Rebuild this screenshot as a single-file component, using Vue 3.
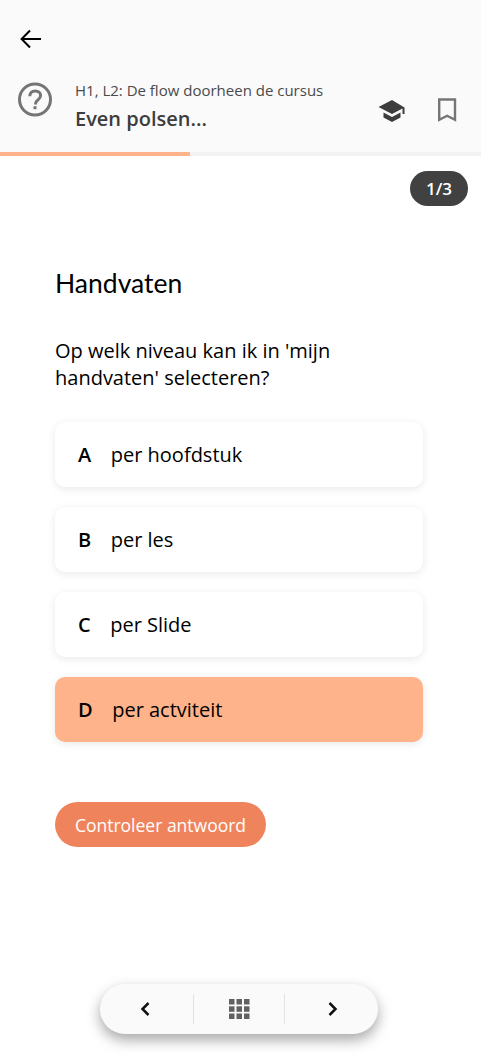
<script setup>
const options = [
  { letter: 'A', text: 'per hoofdstuk', selected: false },
  { letter: 'B', text: 'per les', selected: false },
  { letter: 'C', text: 'per Slide', selected: false },
  { letter: 'D', text: 'per actviteit', selected: true },
]
</script>

<template>
  <div class="page">
    <header class="header">
      <button class="back" aria-label="Terug">
        <svg width="24" height="24" viewBox="0 0 24 24"><path d="M23 12H4M12 3.500 3.600 12l8.400 8.500" fill="none" stroke="#000" stroke-width="2"/></svg>
      </button>
      <div class="title-row">
        <svg class="help" width="36" height="36" viewBox="0 0 36 36">
          <circle cx="18" cy="17.500" r="15.500" fill="none" stroke="#757575" stroke-width="3"/>
          <path d="M12.700 14.200c0-3.200 2.400-5.300 5.500-5.300s5.400 1.900 5.400 4.700c0 2.200-1.200 3.300-2.700 4.400-1.500 1.100-2.400 2-2.400 4v.4" fill="none" stroke="#757575" stroke-width="3"/>
          <rect x="16.500" y="24.200" width="3" height="3" fill="#757575"/>
        </svg>
        <div class="titles">
          <div class="crumb">H1, L2: De flow doorheen de cursus</div>
          <div class="title">Even polsen...</div>
        </div>
        <svg class="cap" width="28" height="24" viewBox="0 0 28 24">
          <path d="M14 1 .5 8 14 15l10.500-5.400V15h2V8.500z" fill="#3d3d3d"/>
          <path d="M5.500 13.600v4.900L14 23l8.500-4.500v-4.900L14 18z" fill="#3d3d3d"/>
        </svg>
        <svg class="bookmark" width="20" height="24" viewBox="0 0 20 24">
          <path d="M2.200 1.500h15.800v20.300l-7.900-4-7.900 4z" fill="none" stroke="#757575" stroke-width="2.400"/>
        </svg>
      </div>
    </header>
    <div class="progress"><div class="progress-fill"></div></div>

    <div class="badge-row"><span class="badge">1/3</span></div>

    <main class="content">
      <h1 class="heading">Handvaten</h1>
      <p class="question">Op welk niveau kan ik in 'mijn handvaten' selecteren?</p>
      <div class="options">
        <div v-for="o in options" :key="o.letter" class="option" :class="{ selected: o.selected }">
          <span class="letter">{{ o.letter }}</span>
          <span>{{ o.text }}</span>
        </div>
      </div>
      <button class="check">Controleer antwoord</button>
    </main>

    <nav class="nav">
      <div class="nav-cell">
        <svg class="prev" width="14" height="18" viewBox="0 0 14 18"><path d="M10.500 3 4.500 9l6 6" fill="none" stroke="#111" stroke-width="2.500"/></svg>
      </div>
      <div class="nav-cell middle">
        <svg width="21" height="20" viewBox="0 0 21 20" fill="#616161">
          <rect x="0" y="0" width="5.500" height="5.500"/><rect x="7.500" y="0" width="5.500" height="5.500"/><rect x="15" y="0" width="5.500" height="5.500"/>
          <rect x="0" y="7.300" width="5.500" height="5.500"/><rect x="7.500" y="7.300" width="5.500" height="5.500"/><rect x="15" y="7.300" width="5.500" height="5.500"/>
          <rect x="0" y="14.500" width="5.500" height="5.500"/><rect x="7.500" y="14.500" width="5.500" height="5.500"/><rect x="15" y="14.500" width="5.500" height="5.500"/>
        </svg>
      </div>
      <div class="nav-cell">
        <svg class="next" width="14" height="18" viewBox="0 0 14 18"><path d="M3.500 3l6 6-6 6" fill="none" stroke="#111" stroke-width="2.500"/></svg>
      </div>
    </nav>
  </div>
</template>

<style>
html, body { margin: 0; background: #fff; }
</style>

<style scoped>
.page {
  position: relative;
  width: 481px;
  height: 1054px;
  overflow: hidden;
  font-family: "Open Sans", "Liberation Sans", sans-serif;
  color: #000;
}
.header {
  height: 152px;
  box-sizing: border-box;
  background: #fafafa;
  padding-top: 27px;
}
.back {
  display: block;
  margin-left: 18px;
  padding: 0;
  border: 0;
  background: none;
  height: 24px;
}
.title-row {
  display: flex;
  align-items: flex-start;
  margin-top: 29px;
  padding-left: 17px;
}
.help { margin-top: 2px; flex: none; }
.titles { margin-left: 22px; width: 303px; }
.crumb {
  font-size: 15px;
  line-height: 20px;
  color: #4a4a4a;
}
.title {
  margin-top: 5px;
  font-size: 20px;
  line-height: 27px;
  font-weight: 600;
  color: #3d3d3d;
}
.cap { margin-top: 19px; flex: none; }
.bookmark { margin-left: 31px; margin-top: 18px; flex: none; }
.progress { height: 4px; background: #f2f2f2; }
.progress-fill { width: 190px; height: 100%; background: #ffb38a; }
.badge-row {
  display: flex;
  justify-content: flex-end;
  padding: 15px 13px 0 0;
}
.badge {
  width: 58px;
  height: 35px;
  border-radius: 18px;
  background: #414141;
  color: #fff;
  font-size: 17px;
  font-weight: 600;
  line-height: 35px;
  text-align: center;
}
.content { padding: 59px 58px 0 55px; }
.heading {
  margin: 0;
  font-family: Lato, "Open Sans", sans-serif;
  font-size: 26.500px;
  line-height: 36px;
  font-weight: 400;
}
.question {
  margin: 36px 0 0;
  font-size: 20px;
  line-height: 27px;
  width: 300px;
}
.options {
  display: flex;
  flex-direction: column;
  gap: 20px;
  margin-top: 31px;
}
.option {
  display: flex;
  align-items: center;
  height: 65px;
  box-sizing: border-box;
  padding-left: 23px;
  border-radius: 10px;
  background: #fff;
  box-shadow: 0 2px 8px rgba(0, 0, 0, 0.09);
  font-size: 20px;
}
.option.selected { background: #ffb38a; }
.letter { font-weight: 600; margin-right: 19.500px; }
.check {
  display: block;
  margin-top: 60px;
  width: 211px;
  height: 45px;
  padding: 0;
  border: 0;
  border-radius: 23px;
  background: #ef845c;
  color: #fff;
  font-family: inherit;
  font-size: 17.500px;
}
.nav {
  position: absolute;
  left: 100px;
  top: 984px;
  width: 278px;
  height: 50px;
  display: flex;
  border-radius: 25px;
  background: #fafafa;
  box-shadow: 0 6px 14px rgba(0, 0, 0, 0.35);
}
.nav-cell {
  flex: 1;
  display: flex;
  align-items: center;
  justify-content: center;
}
.prev { margin-right: 2px; }
.next { margin-left: 2px; }
.nav-cell.middle { position: relative; }
.nav-cell.middle::before,
.nav-cell.middle::after {
  content: "";
  position: absolute;
  top: 10px;
  bottom: 10px;
  width: 1px;
  background: #e2e2e2;
}
.nav-cell.middle::before { left: 0; }
.nav-cell.middle::after { right: 0; }
</style>
